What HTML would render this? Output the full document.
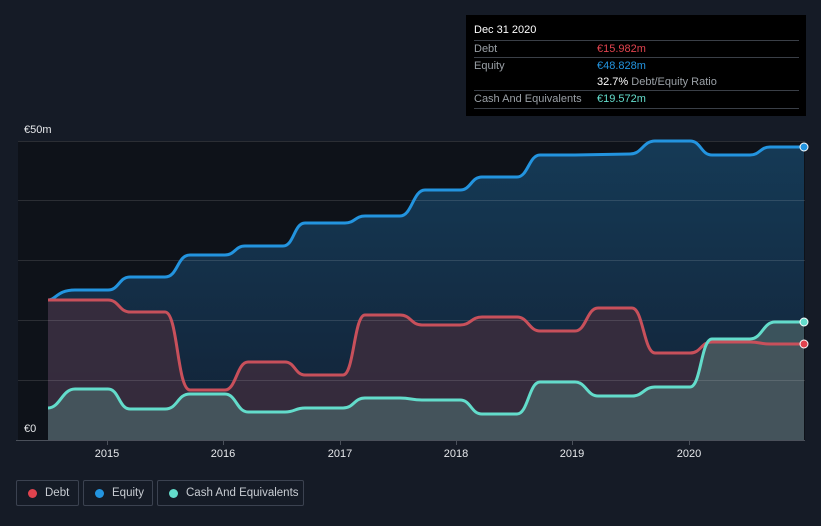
<!DOCTYPE html>
<html><head><meta charset="utf-8"><style>
html,body{margin:0;padding:0;background:#151b26;width:821px;height:526px;overflow:hidden;font-family:"Liberation Sans",sans-serif;}
.tt{position:absolute;left:466px;top:15px;width:340px;height:101px;background:#000;color:#fff;font-size:11px;}
.row{position:absolute;left:8px;right:7px;border-top:1px solid #3a3f47;height:17px;line-height:17px;color:#9aa0a6;}
.leg{position:absolute;top:480px;height:26px;border:1px solid #3b4250;border-radius:2px;color:#c8ccd2;font-size:11.5px;line-height:24px;box-sizing:border-box;white-space:nowrap;}
.leg span{white-space:nowrap;}
.leg i{position:absolute;left:11px;top:8px;width:9px;height:9px;border-radius:50%;}
</style></head><body>
<svg width="821" height="526" style="position:absolute;left:0;top:0">
<defs>
<linearGradient id="eq" x1="0" y1="0" x2="0" y2="1"><stop offset="0" stop-color="#153a56"/><stop offset="1" stop-color="#122236"/></linearGradient>
</defs>
<rect x="18" y="141" width="787" height="299" fill="#0e1219"/>
<path d="M48,300 C56,300 57,290 75,290 L108,290 C119,290 119,277 130,277 L165,277 C178,277 177,255 190,255 L225,255 C235,255 235,246 245,246 L283,246 C294,246 294,223 305,223 L345,223 C355,223 355,216 365,216 L400,216 C412,216 413,190 425,190 L460,190 C471,190 471,177 482,177 L517,177 C528,177 529,155 540,155 L575,155 L630,154 C642,154 643,141 655,141 L690,141 C701,141 701,155 712,155 L750,155 C760,155 760,147 770,147 L804,147 L804,440 L48,440Z" fill="url(#eq)"/>
<path d="M48,300 L108,300 C119,300 119,312 130,312 L165,312 C178,312 177,390 190,390 L225,390 C236,390 237,362 248,362 L285,362 C295,362 295,375 305,375 L343,375 C354,375 354,315 365,315 L400,315 C411,315 411,325 422,325 L460,325 C471,325 471,317 482,317 L517,317 C528,317 529,331 540,331 L575,331 C586,331 587,308 598,308 L632,308 C643,308 644,353 655,353 L690,353 C701,353 701,342 712,342 L750,342 C760,342 760,344 770,344 L804,344 L804,440 L48,440Z" fill="#3a2c3d" fill-opacity="0.9"/>
<path d="M48,408 C60,408 62,389 75,389 L108,389 C119,389 119,409 130,409 L165,409 C178,409 177,394 190,394 L225,394 C236,394 237,412 248,412 L285,412 C295,412 295,408 305,408 L343,408 C354,408 354,398 365,398 L400,398 C411,398 411,400 422,400 L460,400 C471,400 471,414 482,414 L517,414 C528,414 529,382 540,382 L575,382 C586,382 587,396 598,396 L632,396 C643,396 644,387 655,387 L690,387 C701,387 701,339 712,339 L750,339 C762,339 763,322 775,322 L804,322 L804,440 L48,440Z" fill="#4a6266" fill-opacity="0.75"/>
<g stroke="#ffffff" stroke-opacity="0.12" stroke-width="1">
<line x1="18" y1="141.5" x2="805" y2="141.5"/><line x1="18" y1="200.5" x2="805" y2="200.5"/><line x1="18" y1="260.5" x2="805" y2="260.5"/><line x1="18" y1="320.5" x2="805" y2="320.5"/><line x1="18" y1="380.5" x2="805" y2="380.5"/>
</g>
<line x1="16" y1="440.5" x2="805" y2="440.5" stroke="#4a505a"/>
<g stroke="#4a505a"><line x1="107.5" y1="440" x2="107.5" y2="445"/><line x1="223.5" y1="440" x2="223.5" y2="445"/><line x1="340.5" y1="440" x2="340.5" y2="445"/><line x1="456.5" y1="440" x2="456.5" y2="445"/><line x1="572.5" y1="440" x2="572.5" y2="445"/><line x1="689.5" y1="440" x2="689.5" y2="445"/></g>
<g fill="none" stroke-width="3">
<path stroke="#2394df" d="M48,300 C56,300 57,290 75,290 L108,290 C119,290 119,277 130,277 L165,277 C178,277 177,255 190,255 L225,255 C235,255 235,246 245,246 L283,246 C294,246 294,223 305,223 L345,223 C355,223 355,216 365,216 L400,216 C412,216 413,190 425,190 L460,190 C471,190 471,177 482,177 L517,177 C528,177 529,155 540,155 L575,155 L630,154 C642,154 643,141 655,141 L690,141 C701,141 701,155 712,155 L750,155 C760,155 760,147 770,147 L804,147"/>
<path stroke="#c8505b" d="M48,300 L108,300 C119,300 119,312 130,312 L165,312 C178,312 177,390 190,390 L225,390 C236,390 237,362 248,362 L285,362 C295,362 295,375 305,375 L343,375 C354,375 354,315 365,315 L400,315 C411,315 411,325 422,325 L460,325 C471,325 471,317 482,317 L517,317 C528,317 529,331 540,331 L575,331 C586,331 587,308 598,308 L632,308 C643,308 644,353 655,353 L690,353 C701,353 701,342 712,342 L750,342 C760,342 760,344 770,344 L804,344"/>
<path stroke="#63dccb" d="M48,408 C60,408 62,389 75,389 L108,389 C119,389 119,409 130,409 L165,409 C178,409 177,394 190,394 L225,394 C236,394 237,412 248,412 L285,412 C295,412 295,408 305,408 L343,408 C354,408 354,398 365,398 L400,398 C411,398 411,400 422,400 L460,400 C471,400 471,414 482,414 L517,414 C528,414 529,382 540,382 L575,382 C586,382 587,396 598,396 L632,396 C643,396 644,387 655,387 L690,387 C701,387 701,339 712,339 L750,339 C762,339 763,322 775,322 L804,322"/>
</g>
<circle cx="804" cy="147" r="4" fill="#2394df" stroke="#fff" stroke-width="1"/>
<circle cx="804" cy="344" r="4" fill="#e0434e" stroke="#fff" stroke-width="1"/>
<circle cx="804" cy="322" r="4" fill="#63dccb" stroke="#fff" stroke-width="1"/>
<g fill="#e6e8eb" font-size="11" font-family="Liberation Sans, sans-serif">
<text x="24" y="133">€50m</text>
<text x="24" y="432">€0</text>
<g text-anchor="middle"><text x="107" y="457">2015</text><text x="223" y="457">2016</text><text x="340" y="457">2017</text><text x="456" y="457">2018</text><text x="572" y="457">2019</text><text x="689" y="457">2020</text></g>
</g>
</svg>
<div class="tt">
<div style="position:absolute;left:8px;top:9px;color:#fff">Dec 31 2020</div>
<div class="row" style="top:25px">Debt<span style="position:absolute;left:123px;color:#e0434e">€15.982m</span></div>
<div class="row" style="top:42px">Equity<span style="position:absolute;left:123px;color:#2394df">€48.828m</span></div>
<div style="position:absolute;left:131px;top:59px;height:17px;line-height:17px;color:#9aa0a6"><b style="color:#fff;font-weight:normal">32.7%</b> Debt/Equity Ratio</div>
<div class="row" style="top:75px;border-bottom:1px solid #3a3f47">Cash And Equivalents<span style="position:absolute;left:123px;color:#63dccb">€19.572m</span></div>
</div>
<div class="leg" style="left:16px;width:63px"><i style="background:#e0434e"></i><span style="position:absolute;left:28px">Debt</span></div>
<div class="leg" style="left:83px;width:70px"><i style="background:#2394df"></i><span style="position:absolute;left:28px">Equity</span></div>
<div class="leg" style="left:157px;width:147px"><i style="background:#63dccb"></i><span style="position:absolute;left:28px">Cash And Equivalents</span></div>
</body></html>
